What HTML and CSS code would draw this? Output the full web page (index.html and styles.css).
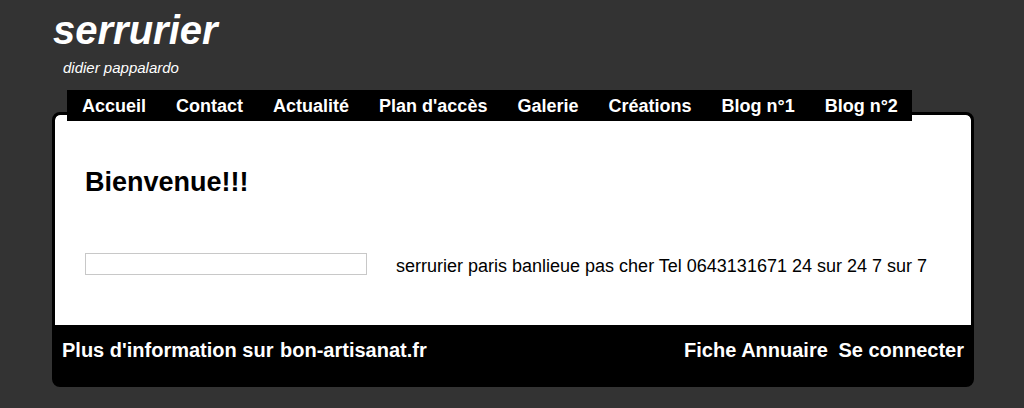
FILE: index.html
```
<!DOCTYPE html>
<html lang="fr">
<head>
    <meta charset="UTF-8">
    <title>serrurier</title>
    <link rel="stylesheet" href="styles.css">
</head>
<body>
    <div class="page">
        <header class="header">
            <h1 class="site-title">serrurier</h1>
            <p class="site-sub">didier pappalardo</p>
        </header>
        <nav class="menu">
            <a href="#">Accueil</a>
            <a href="#">Contact</a>
            <a href="#">Actualité</a>
            <a href="#">Plan d'accès</a>
            <a href="#">Galerie</a>
            <a href="#">Créations</a>
            <a href="#">Blog n°1</a>
            <a href="#">Blog n°2</a>
        </nav>
        <div class="box">
            <main class="content">
                <h2 class="welcome">Bienvenue!!!</h2>
                <div class="row">
                    <div class="empty-frame"></div>
                    <p class="row-text">serrurier paris banlieue pas cher Tel 0643131671 24 sur 24 7 sur 7</p>
                </div>
            </main>
            <footer class="footer">
                <span class="footer-left">Plus d'information sur <a href="#">bon-artisanat.fr</a></span>
                <span class="footer-right">
                    <a href="#">Fiche Annuaire</a>
                    <a href="#">Se connecter</a>
                </span>
            </footer>
        </div>
    </div>
</body>
</html>
```

FILE: styles.css
```
body {
    margin: 0;
    background-color: #333333;
    font-family: 'Liberation Sans', Arial, sans-serif;
    color: #fff;
}
.page {
    width: 922px;
    margin-left: 52px;
}
.header {
    height: 90px;
}
.site-title {
    margin: 0;
    padding-top: 8px;
    padding-left: 1px;
    font-size: 40px;
    font-style: italic;
    font-weight: bold;
    line-height: 44px;
}
.site-sub {
    margin: 7px 0 0 11px;
    font-size: 15px;
    font-style: italic;
    line-height: 18px;
}
.menu {
    display: flex;
    position: relative;
    z-index: 2;
    margin-left: 15px;
    width: 845px;
    height: 31px;
    background: #000;
}
.menu a {
    flex-shrink: 0;
    white-space: nowrap;
    padding: 2px 15px 0;
    color: #fff;
    text-decoration: none;
    font-weight: bold;
    font-size: 18px;
    line-height: 29px;
}
.box {
    margin-top: -9px;
    border: 3px solid #000;
    border-radius: 8px;
    background: #000;
    overflow: hidden;
}
.content {
    background: #fff;
    color: #000;
    height: 210px;
    padding: 0 30px;
    border-radius: 5px 5px 0 0;
    overflow: hidden;
}
.welcome {
    margin: 0;
    padding-top: 51px;
    font-size: 27px;
    line-height: 32px;
}
.row {
    display: flex;
    align-items: flex-start;
    margin-top: 55px;
}
.empty-frame {
    flex-shrink: 0;
    width: 280px;
    height: 20px;
    border: 1px solid #c8c8c8;
}
.row-text {
    margin: 1px 0 0 29px;
    white-space: nowrap;
    font-size: 18px;
    line-height: 24px;
}
.footer {
    box-sizing: border-box;
    display: flex;
    justify-content: space-between;
    height: 59px;
    padding: 12px 7px 0 7px;
    font-size: 20px;
    font-weight: bold;
    line-height: 26px;
}
.footer a {
    color: #fff;
    text-decoration: none;
}
.footer-left a {
    margin-left: 1px;
}
.footer-right a {
    margin-left: 5px;
}
```
